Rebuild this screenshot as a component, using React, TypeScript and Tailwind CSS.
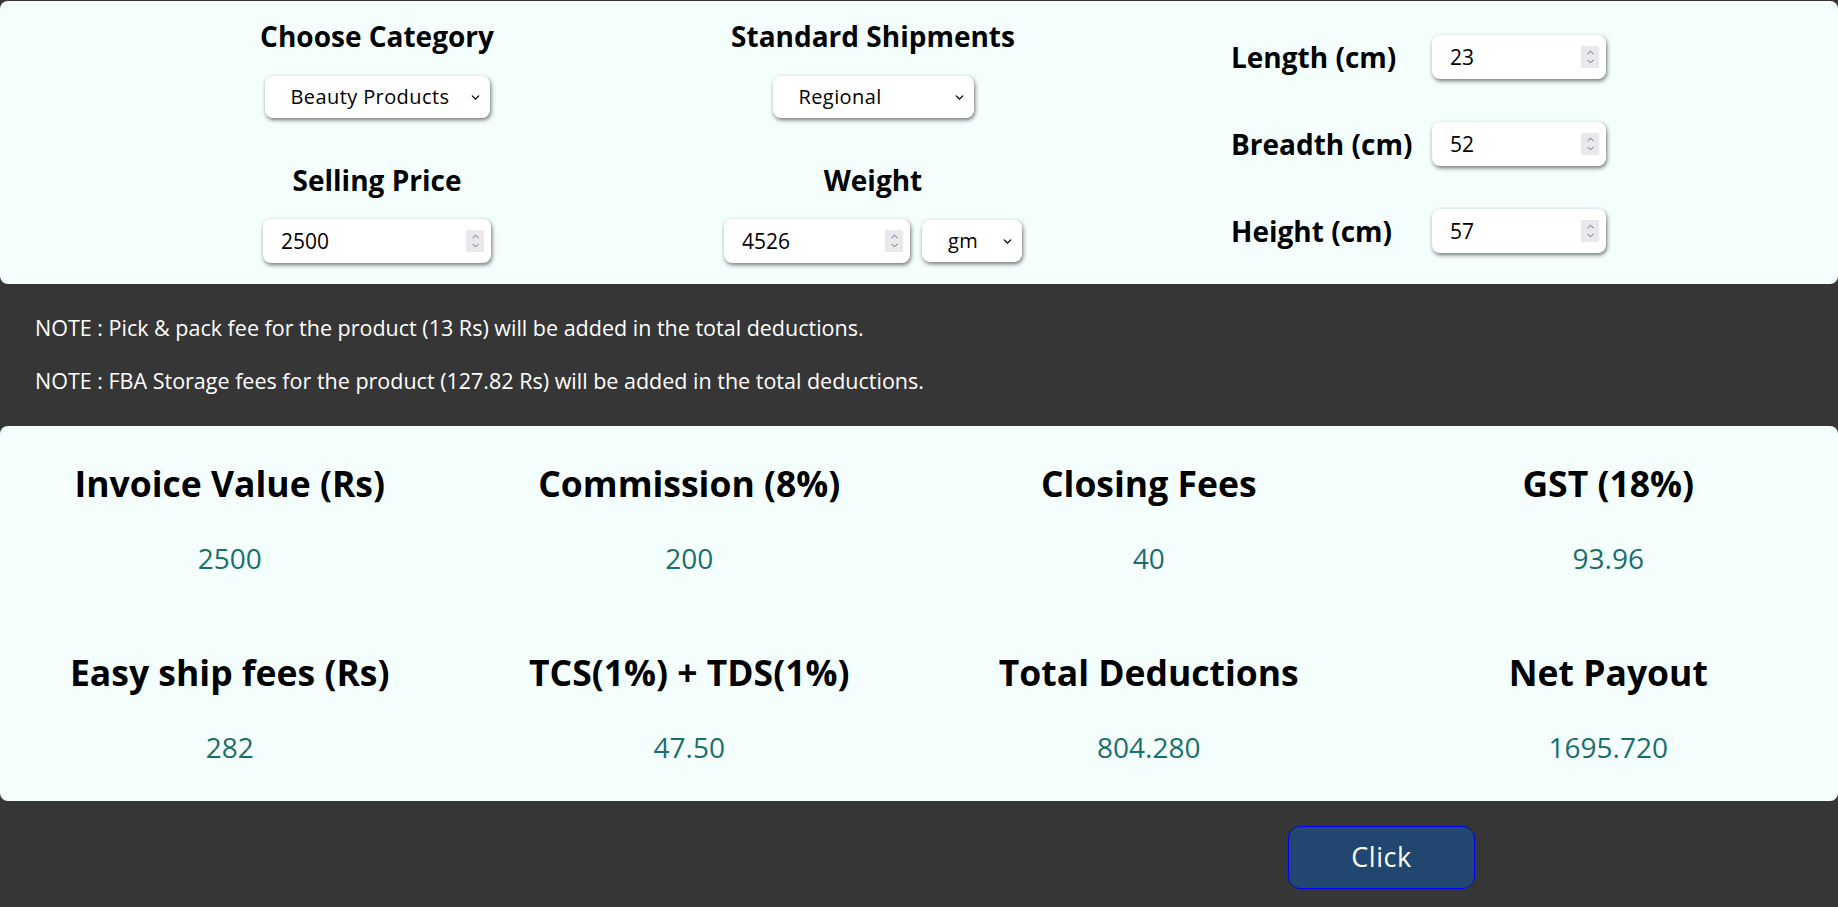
import React from 'react';
import { ChevronDown, ChevronUp } from 'lucide-react';

// number field with a drawn spinner, like the native one in the screenshot
function NumField({ value, width }: { value: string; width: string }) {
    return (
        <div className={`relative h-[44px] ${width} rounded-lg bg-white shadow-[1px_2px_4px_rgba(0,0,0,0.55)]`}>
            <input
                type="text"
                defaultValue={value}
                className="w-full h-full pl-[18px] pr-8 bg-transparent text-[21px] text-black outline-none"
            />
            <div className="absolute right-[7px] top-[11px] w-[18px] h-[22px] bg-[#e9e9ed] flex flex-col items-center justify-center">
                <ChevronUp size={11} strokeWidth={2} className="text-[#5f5f66] -mb-[1px]" />
                <ChevronDown size={11} strokeWidth={2} className="text-[#5f5f66] -mt-[1px]" />
            </div>
        </div>
    );
}

function SelectField({ value, options, width }: { value: string; options: string[]; width: string }) {
    return (
        <div className={`relative h-[42px] ${width} rounded-lg bg-white shadow-[1px_2px_4px_rgba(0,0,0,0.55)]`}>
            <select
                defaultValue={value}
                className="appearance-none w-full h-full pl-[26px] pr-8 bg-transparent text-[20px] tracking-[0.4px] text-black outline-none"
            >
                {options.map(o => (
                    <option key={o}>{o}</option>
                ))}
            </select>
            <ChevronDown size={13} strokeWidth={2.5} className="absolute right-[8px] top-[15px] text-black pointer-events-none" />
        </div>
    );
}

const results = [
    { label: 'Invoice Value (Rs)', value: '2500' },
    { label: 'Commission (8%)', value: '200' },
    { label: 'Closing Fees', value: '40' },
    { label: 'GST (18%)', value: '93.96' },
    { label: 'Easy ship fees (Rs)', value: '282' },
    { label: 'TCS(1%) + TDS(1%)', value: '47.50' },
    { label: 'Total Deductions', value: '804.280' },
    { label: 'Net Payout', value: '1695.720' },
];

export default function App() {
    return (
        <div className="min-h-screen bg-[#363636] font-['Open_Sans',sans-serif] pt-px">
            {/* Inputs panel */}
            <div className="h-[283px] bg-[#f4fffd] rounded-lg flex">
                <div className="ml-[129px] w-[496px] flex flex-col items-center pt-[19px]">
                    <h2 className="text-[28px] leading-8 font-bold text-black">Choose Category</h2>
                    <div className="mt-6">
                        <SelectField value="Beauty Products" options={['Beauty Products', 'Books', 'Electronics', 'Clothing']} width="w-[225px]" />
                    </div>
                    <h2 className="mt-[46px] text-[28px] leading-8 font-bold text-black">Selling Price</h2>
                    <div className="mt-[23px]">
                        <NumField value="2500" width="w-[228px]" />
                    </div>
                </div>

                <div className="w-[496px] flex flex-col items-center pt-[19px]">
                    <h2 className="text-[28px] leading-8 font-bold text-black">Standard Shipments</h2>
                    <div className="mt-6">
                        <SelectField value="Regional" options={['Local', 'Regional', 'National']} width="w-[201px]" />
                    </div>
                    <h2 className="mt-[46px] text-[28px] leading-8 font-bold text-black">Weight</h2>
                    <div className="mt-[23px] flex gap-3">
                        <NumField value="4526" width="w-[186px]" />
                        <div className="mt-px">
                            <SelectField value="gm" options={['gm', 'kg']} width="w-[100px]" />
                        </div>
                    </div>
                </div>

                <div className="ml-[110px] pt-[34px] flex flex-col gap-[43px]">
                    {[
                        { label: 'Length (cm)', value: '23' },
                        { label: 'Breadth (cm)', value: '52' },
                        { label: 'Height (cm)', value: '57' },
                    ].map(row => (
                        <div key={row.label} className="flex items-center">
                            <span className="w-[201px] text-[28px] font-bold text-black">{row.label}</span>
                            <NumField value={row.value} width="w-[174px]" />
                        </div>
                    ))}
                </div>
            </div>

            {/* Notes */}
            <div className="px-[35px] pt-[31px] pb-[32px] text-white text-[21.5px] leading-[26px] flex flex-col gap-[27px]">
                <p>NOTE : Pick &amp; pack fee for the product (13 Rs) will be added in the total deductions.</p>
                <p>NOTE : FBA Storage fees for the product (127.82 Rs) will be added in the total deductions.</p>
            </div>

            {/* Results */}
            <div className="bg-[#f4fffd] rounded-lg grid grid-cols-4 gap-y-[76px] pt-[37px] pb-[36px]">
                {results.map(r => (
                    <div key={r.label} className="flex flex-col items-center">
                        <h1 className="text-[35.5px] leading-10 font-bold text-black">{r.label}</h1>
                        <span className="mt-[37px] text-[28px] leading-9 text-[#1a6e6b]">{r.value}</span>
                    </div>
                ))}
            </div>

            <div className="pt-[25px] pl-[1288px] pb-[18px]">
                <button className="w-[187px] h-[63px] rounded-xl bg-[#21466f] border border-[#0000ff] text-white text-[27px] tracking-[0.5px]">
                    Click
                </button>
            </div>
        </div>
    );
}
